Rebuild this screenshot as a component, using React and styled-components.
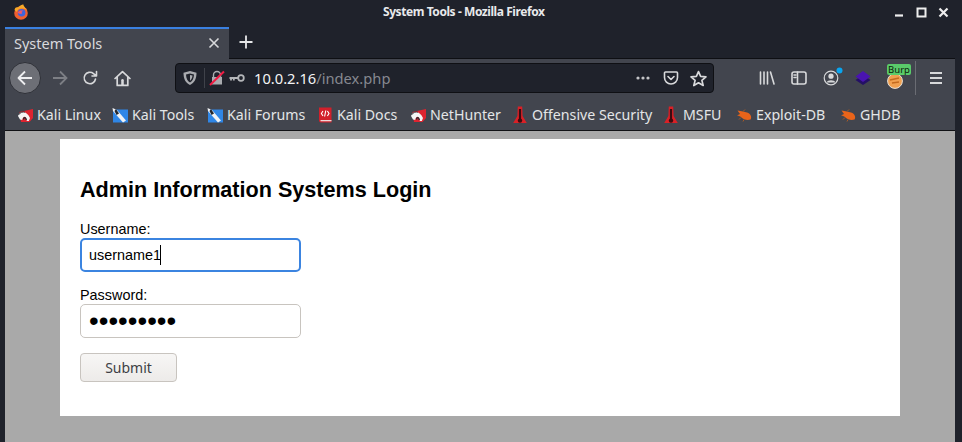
import styled, { createGlobalStyle } from 'styled-components';

const Global = createGlobalStyle`
  html, body { margin: 0; padding: 0; height: 100%; background: #1f222b; overflow: hidden; }
  #root { height: 100%; }
  * { box-sizing: border-box; }
`;

const Frame = styled.div`
  width: 962px;
  height: 442px;
  padding: 0 7px 0 5px;
  background: #1f222b;
  display: flex;
  flex-direction: column;
  font-family: "Noto Sans", "Open Sans", sans-serif;
`;

const TitleBar = styled.header`
  height: 27px;
  flex: none;
  display: flex;
  align-items: center;
  position: relative;
  padding: 0 0 3px 8px;
`;

const WindowTitle = styled.div`
  position: absolute;
  left: 378px;
  top: 3px;
  color: #e8e9eb;
  font-size: 12px;
  font-weight: 700;
  letter-spacing: -0.43px;
  line-height: 18px;
  white-space: nowrap;
`;

const WindowControls = styled.div`
  margin-left: auto;
  margin-right: 5px;
  display: flex;
  align-items: center;
  gap: 9px;
`;

const TabStrip = styled.div`
  height: 32px;
  flex: none;
  display: flex;
  align-items: flex-start;
  border-bottom: 1px solid #0e0f13;
`;

const Tab = styled.div`
  width: 224px;
  height: 32px;
  background: #42454e;
  border-top: 2px solid #3a80e0;
  display: flex;
  align-items: center;
  padding: 0 9px 2px;
  color: #d9dadd;
  font-size: 14.5px;
  justify-content: space-between;
`;

const NewTab = styled.div`
  width: 34px;
  height: 30px;
  display: flex;
  align-items: center;
  justify-content: center;
`;

const Toolbar = styled.div`
  height: 37px;
  flex: none;
  background: #42454e;
  display: flex;
  align-items: center;
  padding: 1px 0 0 4px;
`;

const ToolButton = styled.div`
  width: ${p => p.$w || 32}px;
  height: 32px;
  flex: none;
  display: flex;
  align-items: center;
  justify-content: center;
  position: relative;
`;

const BackButton = styled(ToolButton)`
  border-radius: 50%;
  background: #6d6f76;
  border: 1px solid #2f3138;
`;

const UrlBar = styled.div`
  margin-left: 32px;
  width: 539px;
  height: 30px;
  flex: none;
  background: #1f222b;
  border: 1px solid #0f1014;
  border-radius: 4px;
  display: flex;
  align-items: center;
  padding: 0 3px 0 6px;
`;

const UrlDivider = styled.span`
  width: 1px;
  height: 20px;
  background: #3f424a;
  margin: 0 4px 0 6px;
`;

const UrlText = styled.div`
  color: #f4f4f5;
  font-size: 14.7px;
  margin-left: 5px;
  white-space: nowrap;
  flex: 1;
  span { color: #868890; }
`;

const UrlIcon = styled.div`
  width: ${p => p.$w || 26}px;
  flex: none;
  display: flex;
  align-items: center;
  justify-content: center;
`;

const RightTools = styled.div`
  margin-left: 37px;
  display: flex;
  align-items: center;
`;

const Separator = styled.span`
  width: 1px;
  height: 34px;
  background: #6a6c73;
  margin: 0 4px 0 4px;
`;

const Badge = styled.span`
  position: absolute;
  left: 8px;
  top: 2px;
  width: 24px;
  height: 11px;
  background: #5acb6a;
  border-radius: 2px;
  color: #0c1c0c;
  font-size: 9.5px;
  line-height: 11px;
  text-align: center;
`;

const Bookmarks = styled.nav`
  height: 35px;
  flex: none;
  background: #42454e;
  border-bottom: 1px solid #101115;
  display: flex;
  align-items: center;
  padding: 3px 0 0 12px;
  gap: 12px;
`;

const Bookmark = styled.div`
  display: flex;
  align-items: center;
  gap: 4px;
  color: #e4e5e7;
  font-size: 14.2px;
  white-space: nowrap;
`;

const BookmarkName = styled.span`
  width: ${p => p.$w}px;
`;

const Viewport = styled.main`
  flex: 1;
  background: #a9a9a9;
  padding: 8px 55px 0;
`;

const Panel = styled.section`
  width: 840px;
  height: 277px;
  background: #fff;
  padding: 20px;
  font-family: "Liberation Sans", Arial, sans-serif;
  color: #000;
`;

const Heading = styled.h1`
  margin: 18px 0 18px;
  font-size: 21.6px;
  line-height: 25px;
  font-weight: 700;
`;

const Form = styled.form`
  display: flex;
  flex-direction: column;
  align-items: flex-start;
`;

const Label = styled.label`
  font-size: 14.4px;
  line-height: 18px;
  margin-top: ${p => p.$top || 0}px;
`;

const FieldWrap = styled.div`
  position: relative;
  width: 221px;
  height: 34px;
`;

const Field = styled.input`
  width: 100%;
  height: 100%;
  padding: 0 ${p => (p.type === 'password' ? 8 : 7)}px;
  font: ${p => (p.type === 'password' ? '27.7px' : '14.4px')} "Liberation Sans", Arial, sans-serif;
  color: #000;
  background: #fff;
  border: ${p => (p.$active ? '2px solid #3b84e0' : '1px solid #c8c4bf')};
  border-radius: 5px;
  outline: none;
`;

const Caret = styled.span`
  position: absolute;
  left: 80px;
  top: 7px;
  width: 1px;
  height: 20px;
  background: #000;
`;

const Submit = styled.button`
  margin-top: 15px;
  width: 97px;
  height: 29px;
  border: 1px solid #c8c4bf;
  border-radius: 4px;
  background: linear-gradient(#f7f6f5, #edebe9);
  color: #3d3f45;
  font: 14px "Noto Sans", sans-serif;
  padding: 0;
`;

const Svg = ({ size = 16, w, h, view = '0 0 16 16', children, ...rest }) => (
  <svg width={w || size} height={h || size} viewBox={view} fill="none" {...rest}>{children}</svg>
);

const line = { stroke: '#d8d9db', strokeWidth: 1.6, strokeLinecap: 'round', strokeLinejoin: 'round' };

const FirefoxLogo = () => (
  <Svg size={16}>
    <circle cx="8" cy="9" r="6.8" fill="#ef5f2f" />
    <path d="M1.5 6 C2 3 4 3 5 3.5 C7 1 10 0.5 10.5 0.5 C10 2 13.5 4 14.8 8.5 C14 6 12 4.5 9 4.5 C6 4.5 4 6 4 8 Z" fill="#f7a928" />
    <circle cx="8.6" cy="8.8" r="3.8" fill="#3f64dc" />
    <path d="M4.8 8.2 C6 6.4 8.4 6.2 10.4 6.8 C8.6 7.2 8.4 8.4 9.2 9.4 C7.4 10.2 5.4 9.8 4.8 8.2 Z" fill="#f0566a" />
  </Svg>
);

const KaliDragon = () => (
  <Svg size={16}>
    <path d="M2.5 5 L16 2 L16 11 L12.5 15 L4 15 Z" fill="#de2430" />
    <path d="M1 9 C2.5 3.5 9.5 3 13 11 L11.8 14 L9.8 14 C9.5 9 6.2 8.2 5.2 13 L3 12.4 Z" fill="#f5f5f5" />
    <path d="M6.4 12.5 C7 9.8 8.6 10 9.4 13" stroke="#26282e" strokeWidth="1.3" />
    <path d="M1.5 8 C3 5.2 6 4.6 8 5.2" stroke="#2b2d33" strokeWidth="0.9" />
  </Svg>
);

const KaliTools = () => (
  <Svg size={16}>
    <rect x="1" y="2.5" width="15" height="13" fill="#2f86e6" />
    <path d="M0.5 1 L5 3 L14 13.5 L11 15.5 L3.5 7 L1 4 Z" fill="#f0f2f4" />
    <path d="M4 2 L7 6.5 L4.5 8 L2.5 4 Z" fill="#23262c" />
  </Svg>
);

const KaliDocs = () => (
  <Svg size={16}>
    <path d="M2 0.5 H14.5 V15.5 H4 A2 2 0 0 1 2 13.5 Z" fill="#d2202b" />
    <path d="M3.5 13 H14.5 V14.3 H3.5 Z" fill="#f0d8d8" />
    <path d="M6 4 L4.4 6.5 L6 9 M10.4 4 L12 6.5 L10.4 9 M8.8 3.5 L7.6 9.5" stroke="#fff" strokeWidth="1.1" />
  </Svg>
);

const Offensive = () => (
  <Svg w={16} h={18} view="0 0 16 18">
    <path d="M5.8 0.5 H10.2 L10.6 10 L14.8 17 H1.2 L5.4 10 Z" fill="#d92026" />
    <path d="M8 3 V16" stroke="#3a0b10" strokeWidth="2.2" />
    <circle cx="8" cy="14.6" r="2.2" fill="#3a0b10" />
  </Svg>
);

const Bug = () => (
  <Svg size={16}>
    <path d="M1.5 3.5 L7 4.5 L11 5.5 C15 6.5 16 10.5 14.5 12.5 C11 13.5 7.5 12.5 5.5 10.5 C4.5 9.5 3 8.8 1 8.6 C2.5 7.6 3.5 7.4 4 7 Z" fill="#e9641a" />
    <path d="M5 10.5 L3 12.5 M8 12.5 L7 14.5 M7 4.5 L9 2.5" stroke="#a85a26" strokeWidth="1" />
  </Svg>
);

// text widths keep each bookmark on the same x as the Cantarell original
const links = [
  ['Kali Linux', KaliDragon, 63],
  ['Kali Tools', KaliTools, 63],
  ['Kali Forums', KaliTools, 78],
  ['Kali Docs', KaliDocs, 61],
  ['NetHunter', KaliDragon, 70],
  ['Offensive Security', Offensive, 119],
  ['MSFU', Offensive, 41],
  ['Exploit-DB', Bug, 72],
  ['GHDB', Bug, 42],
];

export default function App() {
  return (
    <>
      <Global />
      <Frame>
        <TitleBar>
          <FirefoxLogo />
          <WindowTitle>System Tools - Mozilla Firefox</WindowTitle>
          <WindowControls>
            <Svg size={13} view="0 0 13 13"><path d="M2 9.5 H10" stroke="#eee" strokeWidth="2.2" /></Svg>
            <Svg size={13} view="0 0 13 13"><rect x="2.5" y="2.5" width="8" height="8" stroke="#eee" strokeWidth="2" /></Svg>
            <Svg size={13} view="0 0 13 13"><path d="M2.5 2.5 L10.5 10.5 M10.5 2.5 L2.5 10.5" stroke="#eee" strokeWidth="2.2" /></Svg>
          </WindowControls>
        </TitleBar>

        <TabStrip>
          <Tab>
            <span>System Tools</span>
            <Svg size={12} view="0 0 12 12"><path d="M1.5 1.5 L10.5 10.5 M10.5 1.5 L1.5 10.5" stroke="#d8d9db" strokeWidth="1.6" /></Svg>
          </Tab>
          <NewTab>
            <Svg size={16}><path d="M8 1.5 V14.5 M1.5 8 H14.5" stroke="#e6e7e9" strokeWidth="1.8" /></Svg>
          </NewTab>
        </TabStrip>

        <Toolbar>
          <BackButton>
            <Svg size={18} view="0 0 18 18"><path d="M16 9 H2.5 M9 2.5 L2.5 9 L9 15.5" stroke="#eeeef0" strokeWidth="1.8" strokeLinejoin="round" /></Svg>
          </BackButton>
          <ToolButton $w={38}>
            <Svg size={18} view="0 0 18 18"><path d="M2 9 H15.5 M9 2.5 L15.5 9 L9 15.5" stroke="#7d7f85" strokeWidth="1.8" /></Svg>
          </ToolButton>
          <ToolButton $w={22}>
            <Svg size={16}><path d="M13.5 9 A5.7 5.7 0 1 1 11.5 3.6 L14 5.6 M14.5 1.5 V6 H10" {...line} /></Svg>
          </ToolButton>
          <ToolButton $w={42}>
            <Svg size={17} view="0 0 16 16"><path d="M1 8 L8 1.5 L15 8 M3 7 V14.5 H13 V7" {...line} /><rect x="6.8" y="8.5" width="2.4" height="6" rx="1.2" fill="#d8d9db" /></Svg>
          </ToolButton>

          <UrlBar>
            <UrlIcon $w={16}>
              <Svg size={16}><path d="M8 1 L14.5 2.8 C14.5 9 12.5 13 8 15 C3.5 13 1.5 9 1.5 2.8 Z M8 3.4 L12 4.4 C11.8 8.5 10.5 11 8 12.6 C5.5 11 4.2 8.5 4 4.4 Z M8 5 L10.5 5.6 C10.3 8 9.5 9.6 8 10.8 Z" fill="#a9abaf" fillRule="evenodd" /></Svg>
            </UrlIcon>
            <UrlDivider />
            <UrlIcon $w={16}>
              <Svg size={16}>
                <path d="M3 7 H13 V14.5 H3 Z" fill="#a9abaf" />
                <path d="M4.5 7 V5 A3.5 3.5 0 0 1 11.5 5 V7" stroke="#a9abaf" strokeWidth="1.4" />
                <path d="M1 15 L15 1.5" stroke="#f01c44" strokeWidth="2" />
              </Svg>
            </UrlIcon>
            <UrlIcon $w={24}>
              <Svg size={16}><circle cx="12" cy="8" r="2.8" stroke="#b4b6b9" strokeWidth="1.8" /><path d="M0.5 8 H9.5 M2 8 V10.5 M4.8 8 V10.5" stroke="#b4b6b9" strokeWidth="1.8" /></Svg>
            </UrlIcon>
            <UrlText>10.0.2.16<span>/index.php</span></UrlText>
            <UrlIcon $w={26}>
              <Svg size={16}><circle cx="3" cy="8" r="1.6" fill="#c4c5c8" /><circle cx="8" cy="8" r="1.6" fill="#c4c5c8" /><circle cx="13" cy="8" r="1.6" fill="#c4c5c8" /></Svg>
            </UrlIcon>
            <UrlIcon $w={30}>
              <Svg size={16}><path d="M2.5 2 H13.5 A1 1 0 0 1 14.5 3 V7.5 A6.5 6.5 0 0 1 1.5 7.5 V3 A1 1 0 0 1 2.5 2 Z M5 6.5 L8 9.5 L11 6.5" {...line} /></Svg>
            </UrlIcon>
            <UrlIcon $w={24}>
              <Svg size={17}><path d="M8 1.5 L10 6 L15 6.5 L11.2 9.8 L12.4 14.6 L8 12 L3.6 14.6 L4.8 9.8 L1 6.5 L6 6 Z" {...line} /></Svg>
            </UrlIcon>
          </UrlBar>

          <RightTools>
            <ToolButton>
              <Svg size={16}><path d="M1.5 2 V14 M5 2 V14 M8.5 2 V14 M11.5 2 L15 14" {...line} /></Svg>
            </ToolButton>
            <ToolButton>
              <Svg size={16}><rect x="1" y="2" width="14" height="12" rx="2" {...line} /><path d="M6.5 2 V14 M3 5 H4.8 M3 7.5 H4.8" {...line} /></Svg>
            </ToolButton>
            <ToolButton>
              <Svg size={16}>
                <circle cx="8" cy="8" r="6.8" {...line} strokeWidth="1.2" />
                <circle cx="8" cy="6.2" r="2.6" fill="#d8d9db" />
                <path d="M3.6 12.5 C4.5 9.5 11.5 9.5 12.4 12.5 Z" fill="#d8d9db" />
              </Svg>
              <Svg size={7} view="0 0 7 7" style={{ position: 'absolute', left: 21, top: 5 }}><circle cx="3.5" cy="3.5" r="3" fill="#09a5f0" /></Svg>
            </ToolButton>
            <ToolButton>
              <Svg size={16}>
                <path d="M8 5 L15.5 10 L8 15 L0.5 10 Z" fill="#241066" />
                <path d="M8 1 L15.5 6.5 L8 12 L0.5 6.5 Z" fill="#4a14b0" />
              </Svg>
            </ToolButton>
            <ToolButton>
              <Svg size={16} style={{ marginTop: 5 }}>
                <circle cx="8" cy="8" r="7.4" fill="#f0a050" stroke="#e9e2d8" />
                <path d="M3 7 L12 5 M5 10 L12 9" stroke="#c46a1e" strokeWidth="1.4" />
              </Svg>
              <Badge>Burp</Badge>
            </ToolButton>
            <Separator />
            <ToolButton>
              <Svg size={14} view="0 0 14 14"><path d="M1 2 H13 M1 7 H13 M1 12 H13" stroke="#d8d9db" strokeWidth="1.8" /></Svg>
            </ToolButton>
          </RightTools>
        </Toolbar>

        <Bookmarks>
          {links.map(([name, Icon, width]) => (
            <Bookmark key={name}>
              <Icon />
              <BookmarkName $w={width}>{name}</BookmarkName>
            </Bookmark>
          ))}
        </Bookmarks>

        <Viewport>
          <Panel>
            <Heading>Admin Information Systems Login</Heading>
            <Form>
              <Label htmlFor="username">Username:</Label>
              <FieldWrap>
                <Field id="username" $active type="text" value="username1" readOnly />
                <Caret />
              </FieldWrap>
              <Label htmlFor="password" $top={14}>Password:</Label>
              <FieldWrap>
                <Field id="password" type="password" value="secret123" readOnly />
              </FieldWrap>
              <Submit type="button">Submit</Submit>
            </Form>
          </Panel>
        </Viewport>
      </Frame>
    </>
  );
}
